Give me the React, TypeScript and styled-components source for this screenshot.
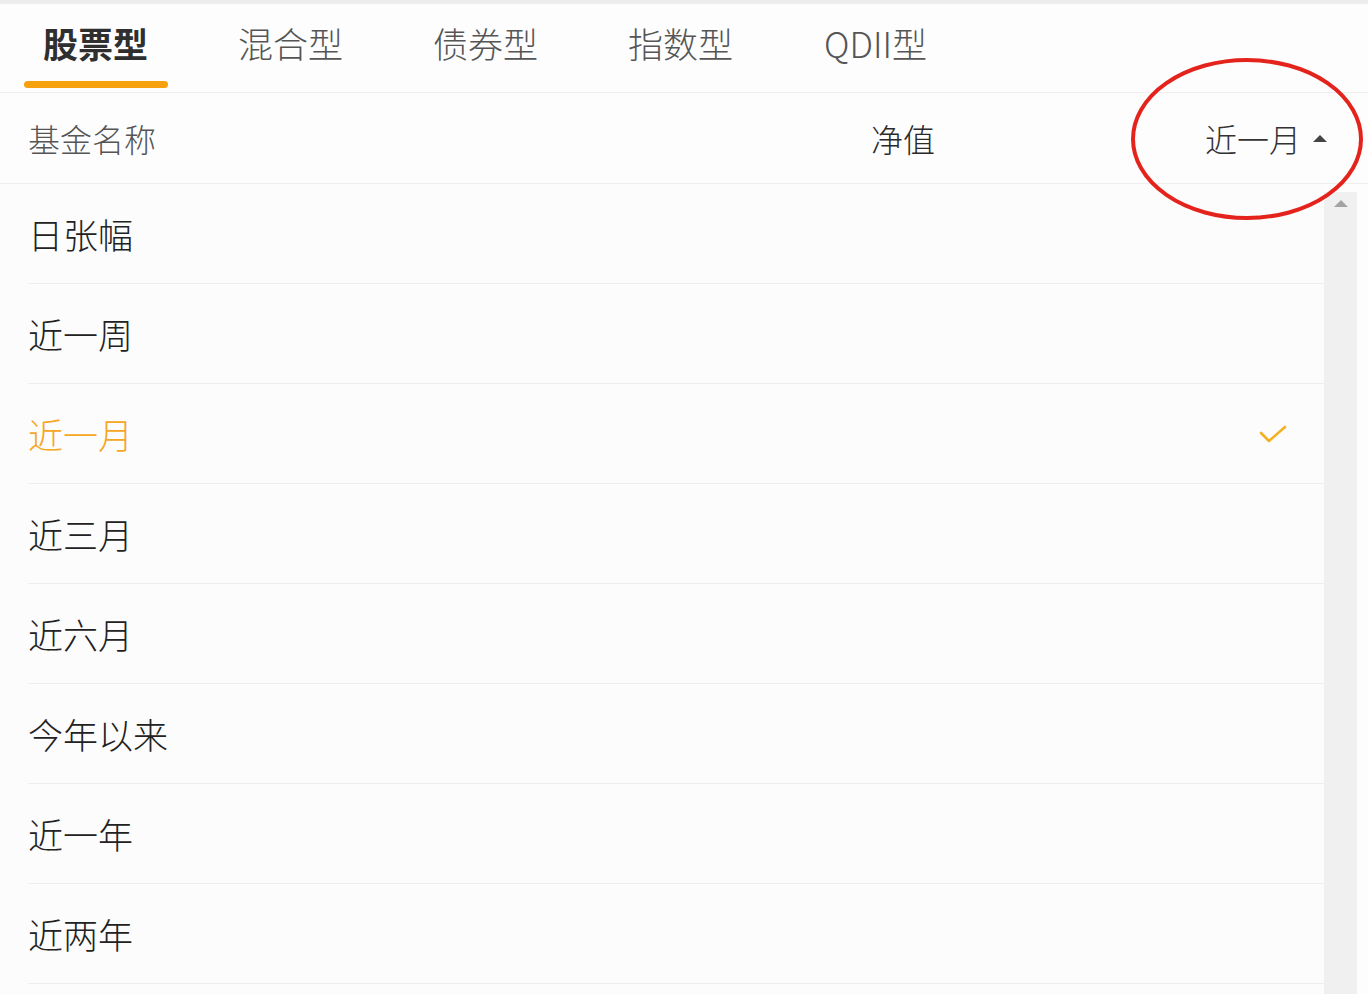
import * as React from "react";
import styled, { createGlobalStyle } from "styled-components";

const GlobalStyle = createGlobalStyle`
	html, body {
		margin: 0;
		padding: 0;
		background: #fdfdfd;
	}

	body {
		font-family: "Noto Sans CJK SC", "Noto Sans", sans-serif;
		color: #222;
	}
`;

const Page = styled.div`
	position: relative;
	width: 1368px;
	height: 994px;
	overflow: hidden;
	background: #fdfdfd;
`;

const TopStrip = styled.div`
	height: 4px;
	background: #ededed;
`;

const TabBar = styled.div`
	height: 89px;
	box-sizing: border-box;
	display: flex;
	margin-left: -2px;
	border-bottom: 1px solid #efefef;
`;

const Tab = styled.div<{ active?: boolean }>`
	width: 195px;
	display: flex;
	flex-direction: column;
	align-items: center;
	justify-content: flex-end;

	.tab__label {
		font-size: 35px;
		line-height: 44px;
		font-weight: ${(props) => (props.active ? 700 : 300)};
		color: ${(props) => (props.active ? "#2f2f2f" : "#555")};
		margin-bottom: 16px;
	}

	.tab__line {
		width: 144px;
		height: 7px;
		border-radius: 4px;
		background: ${(props) => (props.active ? "#f7a10f" : "transparent")};
		margin-bottom: 4px;
	}
`;

const HeaderRow = styled.div`
	height: 91px;
	box-sizing: border-box;
	display: flex;
	align-items: center;
	padding: 0 41px 0 28px;
	border-bottom: 1px solid #efefef;
	font-weight: 300;

	.header__name {
		width: 843px;
		font-size: 32px;
		color: #555;
	}

	.header__net {
		font-size: 32px;
		color: #2a2a2a;
	}

	.header__sort {
		margin-left: auto;
		display: flex;
		align-items: center;
		gap: 12px;
		font-size: 32px;
		color: #333;
	}
`;

const SortArrow = styled.span`
	width: 0;
	height: 0;
	border-left: 7px solid transparent;
	border-right: 7px solid transparent;
	border-bottom: 7px solid #444;
`;

const ListArea = styled.div`
	display: flex;
	height: 810px;
`;

const OptionList = styled.div`
	width: 1324px;
	background: #fcfcfd;
`;

const OptionRow = styled.div<{ selected?: boolean }>`
	height: 100px;
	box-sizing: border-box;
	margin-left: 28px;
	padding-right: 37px;
	display: flex;
	align-items: center;
	justify-content: space-between;
	border-bottom: 1px solid #efeff1;
	font-size: 35px;
	font-weight: 300;
	color: ${(props) => (props.selected ? "#f5a623" : "#222")};
`;

const ScrollTrack = styled.div`
	width: 33px;
	margin-top: 8px;
	background: #f0f0f1;
	display: flex;
	justify-content: center;
	padding-top: 8px;
	box-sizing: border-box;
`;

const ScrollArrow = styled.span`
	width: 0;
	height: 0;
	border-left: 7px solid transparent;
	border-right: 7px solid transparent;
	border-bottom: 7px solid #a3a3a3;
`;

const Annotation = styled.svg`
	position: absolute;
	left: 1129px;
	top: 56px;
`;

const tabs = ["股票型", "混合型", "债券型", "指数型", "QDII型"];
const options = ["日张幅", "近一周", "近一月", "近三月", "近六月", "今年以来", "近一年", "近两年"];

const App = (): JSX.Element => {
	const activeTab = 0;
	const selected = "近一月";

	return (
		<Page>
			<GlobalStyle />
			<TopStrip />
			<TabBar>
				{tabs.map((t, i) => (
					<Tab key={t} active={i === activeTab}>
						<span className="tab__label">{t}</span>
						<span className="tab__line" />
					</Tab>
				))}
			</TabBar>
			<HeaderRow>
				<span className="header__name">基金名称</span>
				<span className="header__net">净值</span>
				<span className="header__sort">
					近一月
					<SortArrow />
				</span>
			</HeaderRow>
			<ListArea>
				<OptionList>
					{options.map((o) => (
						<OptionRow key={o} selected={o === selected}>
							<span>{o}</span>
							{o === selected && (
								<svg width="28" height="20" viewBox="0 0 28 20">
									<path
										d="M2 9 L10 17 L26 3"
										fill="none"
										stroke="#f3b021"
										strokeWidth="2.6"
										strokeLinecap="round"
										strokeLinejoin="round"
									/>
								</svg>
							)}
						</OptionRow>
					))}
				</OptionList>
				<ScrollTrack>
					<ScrollArrow />
				</ScrollTrack>
			</ListArea>
			{/* red hand-drawn highlight around the sort column */}
			<Annotation width="236" height="166" viewBox="0 0 236 166">
				<ellipse cx="118" cy="83" rx="114" ry="79" fill="none" stroke="#e5231d" strokeWidth="4" />
			</Annotation>
		</Page>
	);
};

export default App;
